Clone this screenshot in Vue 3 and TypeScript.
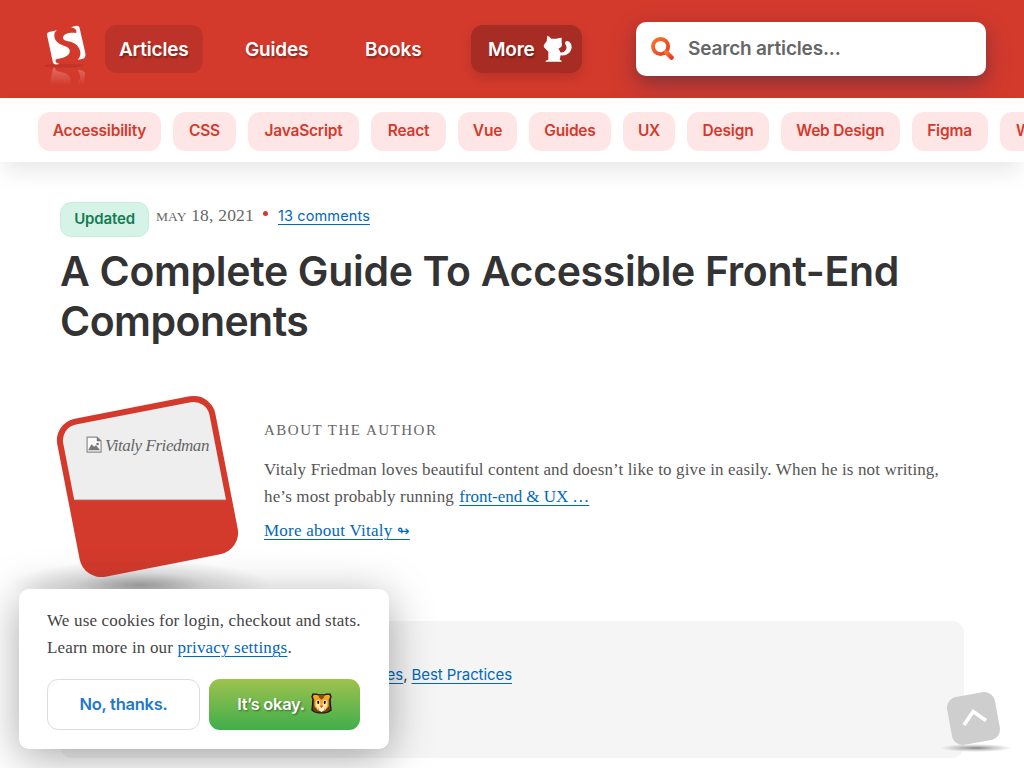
<script setup lang="ts">
interface Topic { label: string; width: number }

const topics: Topic[] = [
  { label: 'Accessibility', width: 123 },
  { label: 'CSS', width: 63 },
  { label: 'JavaScript', width: 111 },
  { label: 'React', width: 75 },
  { label: 'Vue', width: 59 },
  { label: 'Guides', width: 82 },
  { label: 'UX', width: 52 },
  { label: 'Design', width: 82 },
  { label: 'Web Design', width: 118.5 },
  { label: 'Figma', width: 76 },
  { label: 'Wallpapers', width: 115 },
]
</script>

<template>
  <div class="page">
    <header class="header">
      <svg class="logo" viewBox="42 40 132 190" width="44" height="63.3">
        <defs>
          <linearGradient id="fade" x1="0" y1="172" x2="0" y2="226" gradientUnits="userSpaceOnUse">
            <stop offset="0" stop-color="#fff" stop-opacity="0.27" />
            <stop offset="1" stop-color="#fff" stop-opacity="0" />
          </linearGradient>
        </defs>
        <g fill="#fff">
          <path d="M51 76Q50 69 57 67L81 62Q72 67 73 79C74 94 84 101 98 107C113 112 122 118 119 128C116 141 97 146 79 149C74 153 76 161 89 163Q73 169 69 159Z" />
          <path d="M123 53Q140 45 146 50Q148 51 149 56L166 130Q169 145 157 148L143 150Q153 141 151 127C148 111 138 102 124 97C109 93 99 92 99 84C99 74 116 67 139 70Q142 56 123 53Z" />
        </g>
        <ellipse cx="102" cy="168" rx="60" ry="6" fill="#a92c20" opacity=".4" />
        <g fill="url(#fade)">
          <path d="M69 174L75 174Q76 183 83 185Q113 189 121 205L121 226H59Z" />
          <path d="M143 180Q158 180 165 188L163 226H139L150 207Q152 194 143 180Z" />
        </g>
      </svg>
      <nav class="nav">
        <a class="nav-item current">Articles</a>
        <a class="nav-item guides">Guides</a>
        <a class="nav-item books">Books</a>
        <a class="nav-item more">More
          <svg class="cat" viewBox="640 75 88 82" width="29.3" height="27.3">
            <path fill="#fff" d="M653 77Q659 79 665 86H681Q687 83 696 83L696 98Q698 103 696 109Q692 115 686 116Q691 121 692 127Q703 129 709 119Q713 111 707 103Q704 96 711 93Q719 92 724 101Q730 117 719 128Q709 138 693 136L690 149L696 152V155H648V152L656 149L656 125L643 112Q641 105 645 101L651 94Z" />
          </svg>
        </a>
      </nav>
      <div class="search">
        <svg viewBox="0 0 24 24" width="23" height="23">
          <defs><linearGradient id="orange" x1="0" y1="0" x2="1" y2="1"><stop stop-color="#fa7422" /><stop offset="1" stop-color="#e8392a" /></linearGradient></defs>
          <g fill="none" stroke="url(#orange)"><circle cx="10" cy="10" r="7.9" stroke-width="4" /><path d="M16 16L21.5 21.5" stroke-width="4.6" stroke-linecap="round" /></g>
        </svg>
        <span>Search articles...</span>
      </div>
    </header>
    <nav class="topics">
      <a v-for="topic in topics" :key="topic.label" class="topic" :style="{ width: topic.width + 'px' }">{{ topic.label }}</a>
    </nav>

    <main class="content">
      <div class="meta">
        <span class="updated">Updated</span>
        <time><small>MAY</small> 18, 2021</time>
        <i class="dot"></i>
        <a class="link comments">13 comments</a>
      </div>
      <h1>A Complete Guide To Accessible Front-End<br><span class="second">Components</span></h1>
      <section class="author">
        <div class="portrait">
          <div class="ground"></div>
          <div class="frame"><div class="inner"><div class="photo">
            <svg viewBox="0 0 16 17" width="16" height="17">
              <path d="M1 1H11L15 5V16H1Z" fill="#fafafa" stroke="#8a8a8a" stroke-width="1.2" />
              <path d="M11 1V5H15M2.5 14L5.5 8.5L8 11L10 9.5L13.5 14Z" fill="#777" stroke="#777" stroke-width=".5" /><circle cx="11.5" cy="8" r="1.3" fill="#777" />
            </svg>
            <em>Vitaly Friedman</em>
          </div></div></div>
        </div>
        <div class="bio">
          <h2>ABOUT THE AUTHOR</h2>
          <p><span class="line-one">Vitaly Friedman loves beautiful content and doesn’t like to give in easily. When he is not writing,</span><br><span class="line-two">he’s most probably running <a class="link ux">front-end &amp; UX …</a></span></p>
          <p class="more-about"><a class="link">More about Vitaly <span class="arrow">↬</span></a></p>
        </div>
      </section>
      <section class="summary"><p><a class="link">Guides</a>, <a class="link">Best Practices</a></p></section>
    </main>

    <aside class="cookie">
      <p><span class="cookie-one">We use cookies for login, checkout and stats.</span><br><span class="cookie-two">Learn more in our <a class="link">privacy settings</a>.</span></p>
      <div class="actions">
        <button class="decline">No, thanks.</button>
        <button class="accept"><span>It’s okay.</span>
          <svg class="lion" viewBox="0 0 22 22" width="21" height="21">
            <path d="M2 1H6L8 2H14L16 1H20L21 4L20 7L21 18L18 20L14 21H8L4 20L1 18L2 7L1 4Z" fill="#70400f" stroke="#17110a" stroke-width="1.2" />
            <path d="M3 2H6L8 3L14 3L16 2H19L20 4L18.5 7L18.5 14L15 18L11 19.5L7 18L3.5 14V7L2 4Z" fill="#f5a623" />
            <path d="M8 2.5H14L13.5 5L11 7L8.5 5Z" fill="#8e4b13" />
            <path d="M5 8L9 7L10 13L7 17L5 13ZM17 8L13 7L12 13L15 17L17 13Z" fill="#ffe9a8" />
            <path d="M8 14H14L13.5 18L11 20L8.5 18Z" fill="#fff5db" />
            <path d="M9 13H13L11 16Z" fill="#ef4d22" />
            <rect x="6.7" y="8" width="1.8" height="3.4" rx=".9" /><rect x="13.5" y="8" width="1.8" height="3.4" rx=".9" />
          </svg>
        </button>
      </div>
    </aside>

    <a class="to-top">
      <svg viewBox="0 0 84 66" width="84" height="66">
        <defs><radialGradient id="soft"><stop stop-color="#000" stop-opacity=".48" /><stop offset=".5" stop-color="#000" stop-opacity=".2" /><stop offset="1" stop-color="#000" stop-opacity="0" /></radialGradient></defs>
        <ellipse cx="46" cy="58" rx="36" ry="4" fill="url(#soft)" />
        <g transform="rotate(-10.5 43.5 28.5)"><rect x="19.2" y="4.2" width="48.6" height="48.6" rx="11" fill="#cacaca" fill-opacity=".92" /></g>
        <path d="M34 35L43.2 21.5L56 30.5" fill="none" stroke="#fff" stroke-width="3.7" />
      </svg>
    </a>
  </div>
</template>

<style>
html, body { margin: 0; overflow: hidden; background: #fff; }
</style>

<style scoped>
* { box-sizing: border-box; }
.page { position: relative; width: 1024px; height: 768px; overflow: hidden; background: #fff; font-family: Inter, "Liberation Sans", sans-serif; color: #333; }
.header { display: flex; height: 98px; background: #d33a2c; }
.logo { margin: 23px 0 0 44px; flex: none; }
.nav { display: flex; margin: 25px 0 0 17px; height: 48px; width: 477px; flex: none; }
.nav-item { display: flex; align-items: center; border-radius: 12px; color: #fff; font-size: 19px; font-weight: 600; letter-spacing: -.2px; padding-left: 14px; text-shadow: 1px 2px 2px rgba(0,0,0,.35); white-space: nowrap; }
.current { width: 98px; background: #bd3329; }
.guides { width: 91px; margin-left: 28px; }
.books { width: 86px; margin-left: 29px; letter-spacing: -.05px; }
.more { width: 111px; margin-left: 34px; padding-left: 17px; background: #a72c23; box-shadow: 0 5px 12px rgba(0,0,0,.12); }
.cat { margin-left: 8px; margin-top: -1px; }
.search { display: flex; align-items: center; width: 350px; height: 54px; margin: 22px 0 0 54px; padding-left: 14px; border-radius: 10px; background: #fff; color: #666; font-size: 19px; font-weight: 600; letter-spacing: -.17px; box-shadow: 0 10px 24px rgba(50,50,93,.34), 0 4px 12px rgba(0,0,0,.14); }
.search svg { margin-left: 1px; margin-top: -1px; }
.search span { margin-left: 14px; margin-top: -2px; }
.topics { position: relative; display: flex; gap: 12px; height: 64px; padding: 14px 0 0 38px; background: #fff; box-shadow: 0 12px 24px -4px rgba(0,0,0,.1); }
.topic { flex: none; height: 39px; border-radius: 12px; background: #ffe6e6; color: #d33a2c; font-size: 15.5px; font-weight: 600; letter-spacing: -.2px; line-height: 38px; text-align: center; }
.content { padding: 40px 60px 0; }
.link { color: #0068bd; text-decoration: underline; text-decoration-thickness: 1px; text-underline-offset: 3px; }
.meta { display: flex; height: 35px; }
.updated { width: 89px; height: 35px; border: 1px solid #c5efdc; border-radius: 11px; background: #d5f3e6; color: #137c53; font-size: 15px; font-weight: 600; letter-spacing: -.15px; line-height: 32px; text-align: center; }
time { margin-left: 7px; width: 98px; font: 17.5px/27px "Liberation Serif", serif; letter-spacing: .2px; color: #666; white-space: nowrap; }
time small { font-size: 13.5px; letter-spacing: .1px; }
.dot { width: 5px; height: 5px; margin: 9px 0 0 9px; border-radius: 50%; background: #d33a2c; }
.comments { margin-left: 10px; font-size: 14.5px; line-height: 27px; letter-spacing: .12px; white-space: nowrap; }
h1 { margin: 9px 0 0; font-size: 41px; line-height: 50px; font-weight: 600; letter-spacing: -.33px; white-space: nowrap; }
.second { letter-spacing: -.55px; }
.author { display: flex; height: 226px; margin-top: 49px; }
.portrait { position: relative; width: 204px; height: 226px; flex: none; }
.frame { width: 161px; height: 161px; margin: 11px 0 0 7px; padding: 6px; border-radius: 22px; background: #d33a2c; transform: rotate(-11deg); position: relative; }
.inner { position: relative; width: 149px; height: 149px; border-radius: 16px; overflow: hidden; }
.photo { display: flex; align-items: flex-start; position: absolute; width: 200px; height: 150px; left: -25px; top: -63px; padding: 86px 0 0 50px; background: #eee; border-bottom: 1px solid #bbb; transform: rotate(11deg); white-space: nowrap; color: #666; }
.photo svg { flex: none; }
.photo em { font: italic 17px/20px "Liberation Serif", serif; letter-spacing: -.45px; margin-left: 3px; }
.ground { position: absolute; left: -50px; top: 165px; width: 260px; height: 50px; background: radial-gradient(closest-side, rgba(0,0,0,.34), rgba(0,0,0,.11) 50%, transparent); }
.bio { font-family: "Liberation Serif", serif; color: #555; }
h2 { margin: 22px 0 12px; font-size: 15px; line-height: 27px; font-weight: 400; letter-spacing: 1.5px; color: #666; }
.bio p { margin: 0; font-size: 17px; line-height: 27px; letter-spacing: .13px; white-space: nowrap; }
.ux { letter-spacing: -.05px; margin-left: 1px; }
.bio .more-about { margin-top: 7px; letter-spacing: .25px; }
.arrow { font-family: "DejaVu Sans", sans-serif; font-size: 15px; }
.summary { height: 137px; border-radius: 12px; background: #f5f5f5; }
.summary p { margin: 0; padding-top: 40px; width: 452px; text-align: right; font-size: 15px; line-height: 27px; letter-spacing: -.08px; }
.cookie { position: absolute; left: 19px; top: 589px; width: 370px; height: 160px; padding: 18px 28px; border-radius: 10px; background: #fff; box-shadow: 0 8px 44px rgba(0,0,0,.34); }
.cookie p { margin: 0 0 18px; font: 17px/27px "Liberation Serif", serif; color: #444; white-space: nowrap; letter-spacing: .17px; }
.actions { display: flex; gap: 9px; }
button { height: 51px; border-radius: 11px; font: 600 16.5px Inter, sans-serif; padding: 0 0 2px; }
.decline { width: 153px; border: 1px solid #ddd; background: #fff; color: #2078ce; letter-spacing: -.25px; }
.accept { display: flex; align-items: center; justify-content: center; gap: 6px; width: 151px; border: 0; background: linear-gradient(#9fc24e, #3fae4c); color: #fff; letter-spacing: -.3px; text-shadow: 1px 1px 2px rgba(0,0,0,.45); }
.to-top { position: absolute; left: 930px; top: 690px; width: 84px; height: 66px; }
</style>
